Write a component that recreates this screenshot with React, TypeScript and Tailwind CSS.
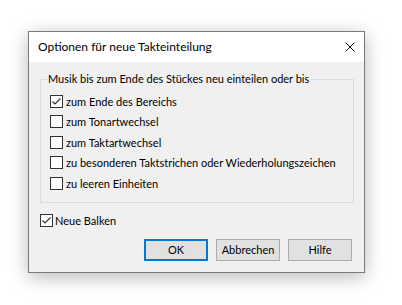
import React from "react";

function Check({ checked }: { checked?: boolean }) {
  return (
    <span className="w-[13px] h-[13px] border border-[#333333] bg-white shrink-0 flex items-center justify-center">
      {checked && (
        <svg width="11" height="11" viewBox="0 0 11 11">
          <path d="M1.5 5.5 L4 8 L9.5 2.5" fill="none" stroke="#333333" strokeWidth="1.2" />
        </svg>
      )}
    </span>
  );
}

function Row({ label, checked }: { label: string; checked?: boolean }) {
  return (
    <div className="flex items-center h-[20.5px] gap-[3px]">
      <Check checked={checked} />
      <span className="leading-none whitespace-nowrap">{label}</span>
    </div>
  );
}

export default function App() {
  return (
    <div className="w-[402px] h-[305px] bg-white pt-[31px] pl-[28px] text-[11px] text-black" style={{ fontFamily: 'Lato, "Liberation Sans", Arial, sans-serif' }}>
      <div className="w-[337px] h-[242px] border border-[#7a7a7a] bg-[#f0f0f0] shadow-[0_4px_18px_rgba(0,0,0,0.28)] flex flex-col">
        <div className="h-[30px] bg-white flex items-center justify-between pl-[9px] pr-[9px] shrink-0">
          <span className="text-[12px] whitespace-nowrap">Optionen für neue Takteinteilung</span>
          <svg width="10" height="10" viewBox="0 0 10 10">
            <path d="M0.5 0.5 L9.5 9.5 M9.5 0.5 L0.5 9.5" stroke="#111" strokeWidth="1" />
          </svg>
        </div>
        <div className="flex flex-col pl-[11px] pr-[10px] pt-[17px]">
          <div className="relative border border-[#dcdcdc] h-[124px] pt-[17px] pl-[9px]">
            <span className="absolute left-[6px] top-[-9px] bg-[#f0f0f0] px-[1px] leading-[16px] whitespace-nowrap">
              Musik bis zum Ende des Stückes neu einteilen oder bis
            </span>
            <div className="flex flex-col mt-[-6px]">
              <Row label="zum Ende des Bereichs" checked />
              <Row label="zum Tonartwechsel" />
              <Row label="zum Taktartwechsel" />
              <Row label="zu besonderen Taktstrichen oder Wiederholungszeichen" />
              <Row label="zu leeren Einheiten" />
            </div>
          </div>
          <div className="flex items-center gap-[2px] mt-[11px] h-[13px]">
            <Check checked />
            <span className="leading-none whitespace-nowrap">Neue Balken</span>
          </div>
          <div className="flex justify-end gap-[8px] mt-[12px] pr-[2px]">
            <button className="w-[64px] h-[22px] bg-[#e1e1e1] border-2 border-[#0078d7] flex items-center justify-center">OK</button>
            <button className="w-[64px] h-[22px] bg-[#e1e1e1] border border-[#adadad] flex items-center justify-center">Abbrechen</button>
            <button className="w-[64px] h-[22px] bg-[#e1e1e1] border border-[#adadad] flex items-center justify-center">Hilfe</button>
          </div>
        </div>
      </div>
    </div>
  );
}
